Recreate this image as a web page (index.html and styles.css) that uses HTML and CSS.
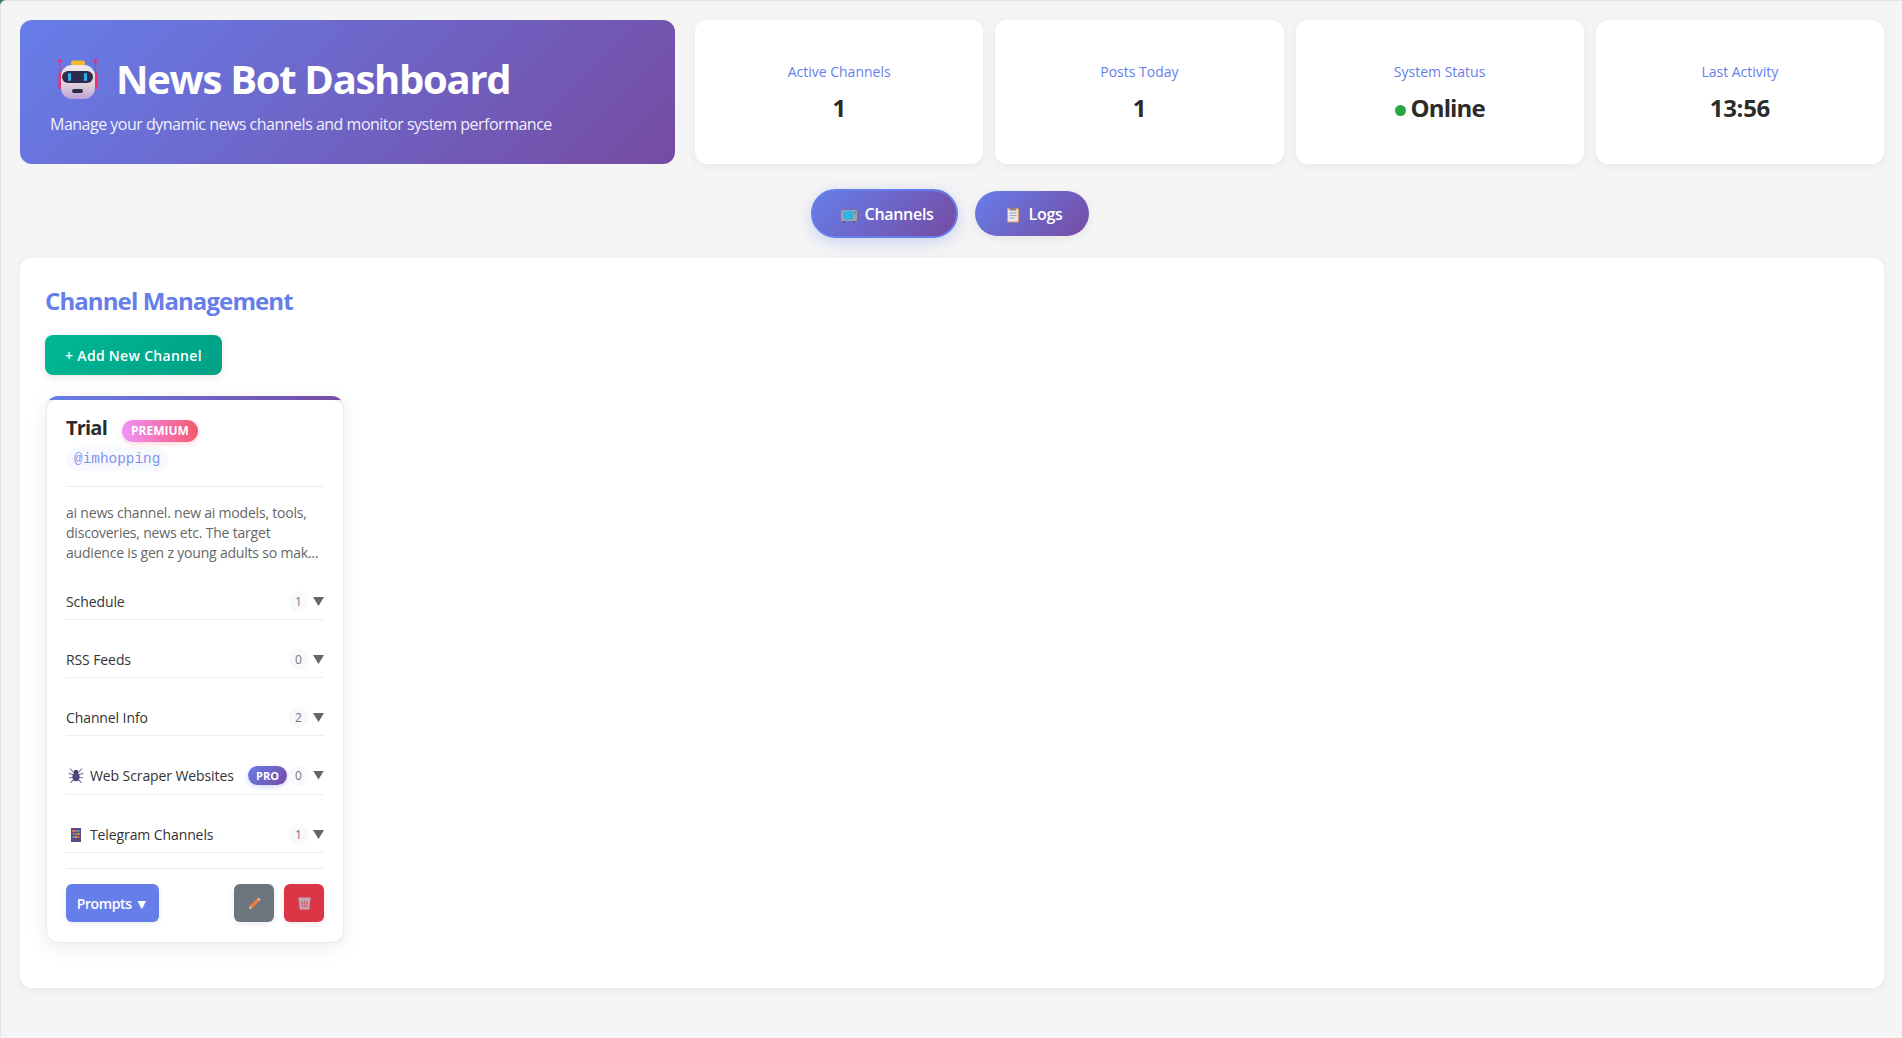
FILE: index.html
```html
<!DOCTYPE html>
<html lang="en">
    <head>
        <meta charset="UTF-8">
        <meta name="viewport" content="width=device-width, initial-scale=1.0">
        <title>News Bot Dashboard</title>
        <link rel="stylesheet" href="styles.css">
    </head>
    <body>
        <div class="top-row">
            <header class="hero">
                <h1>
                    <svg class="robot" viewBox="0 0 40 40">
                        <defs>
                            <linearGradient id="robotFace" x1="0" y1="0" x2="0" y2="1">
                                <stop offset="0" stop-color="#efe9ee"/>
                                <stop offset="0.6" stop-color="#dcd0dc"/>
                                <stop offset="1" stop-color="#bf9fd6"/>
                            </linearGradient>
                        </defs>
                        <rect x="1.2" y="2" width="1.2" height="14" fill="#ee2f6c"/>
                        <rect x="37" y="2" width="1.2" height="14" fill="#ee2f6c"/>
                        <circle cx="1.800" cy="2" r="1.700" fill="#f52a5e"/>
                        <circle cx="37.600" cy="2" r="1.700" fill="#f52a5e"/>
                        <rect x="0.500" y="14" width="5" height="16" rx="1.500" fill="#ee2f6c"/>
                        <rect x="34.500" y="14" width="5" height="16" rx="1.500" fill="#ee2f6c"/>
                        <rect x="13" y="1.500" width="14" height="5" rx="2.500" fill="#f4b92c"/>
                        <rect x="3" y="6" width="34" height="34" rx="11" fill="url(#robotFace)"/>
                        <rect x="4" y="12" width="31" height="12" rx="6" fill="#2f2b4f"/>
                        <rect x="10" y="14" width="3" height="8" rx="1.200" fill="#2bb2ee"/>
                        <rect x="26" y="14" width="3" height="8" rx="1.200" fill="#2bb2ee"/>
                        <rect x="14" y="30" width="11" height="4" rx="2" fill="#2f2b4f"/>
                    </svg>
                    <span>News Bot Dashboard</span>
                </h1>
                <p>Manage your dynamic news channels and monitor system performance</p>
            </header>

            <section class="stats">
                <div class="stat-card">
                    <div class="stat-label">Active Channels</div>
                    <div class="stat-value">1</div>
                </div>
                <div class="stat-card">
                    <div class="stat-label">Posts Today</div>
                    <div class="stat-value">1</div>
                </div>
                <div class="stat-card">
                    <div class="stat-label">System Status</div>
                    <div class="stat-value status-value"><span class="status-dot"></span>Online</div>
                </div>
                <div class="stat-card">
                    <div class="stat-label">Last Activity</div>
                    <div class="stat-value">13:56</div>
                </div>
            </section>
        </div>

        <nav class="tabs">
            <button class="tab active">
                <svg class="tab-icon" viewBox="0 0 18 18">
                    <path d="M6 5 4 2.500M10 5l2-2.500" stroke="#7a757a" fill="none"/>
                    <rect x="0" y="5" width="16" height="11" rx="1.500" fill="#a39fa3"/>
                    <rect x="2" y="6" width="10" height="8.500" rx="1" fill="#2fb4e6"/>
                    <rect x="13" y="7" width="2" height="1.500" fill="#7a757a"/>
                    <rect x="2" y="16" width="2" height="1.500" fill="#555"/>
                    <rect x="12" y="16" width="2" height="1.500" fill="#555"/>
                </svg>
                Channels
            </button>
            <button class="tab">
                <svg class="tab-icon" viewBox="0 0 18 18">
                    <rect x="2" y="3" width="12" height="14.500" rx="1" fill="#e09a5e"/>
                    <rect x="3" y="4.500" width="10" height="12" fill="#e8e4ee"/>
                    <rect x="5" y="2.500" width="6" height="3" fill="#8b8490"/>
                    <path d="M4.500 8h7M4.500 10.500h7M4.500 13h5" stroke="#aaa4b4"/>
                </svg>
                Logs
            </button>
        </nav>

        <main class="panel">
            <h2>Channel Management</h2>
            <button class="add-btn">+ Add New Channel</button>

            <article class="channel-card">
                <div class="channel-head">
                    <div class="channel-title">
                        <h3>Trial</h3>
                        <span class="premium">PREMIUM</span>
                    </div>
                    <span class="handle">@imhopping</span>
                </div>

                <p class="channel-desc">ai news channel. new ai models, tools, discoveries, news etc. The target audience is gen z young adults so mak...</p>

                <div class="row">
                    <span class="row-name">Schedule</span>
                    <span class="count">1</span>
                    <span class="arrow"></span>
                </div>
                <div class="row">
                    <span class="row-name">RSS Feeds</span>
                    <span class="count">0</span>
                    <span class="arrow"></span>
                </div>
                <div class="row">
                    <span class="row-name">Channel Info</span>
                    <span class="count">2</span>
                    <span class="arrow"></span>
                </div>
                <div class="row row-pro">
                    <svg class="row-icon" viewBox="0 0 16 16">
                        <path d="M6 6 2 1.500M6 8 .5 6M6 10l-5 1M6.500 12l-4 3.500M10 6l4-4.500M10 8l5.500-2M10 10l5 1M9.500 12l4 3.500" stroke="#7a6fa6" stroke-width="1.100" fill="none"/>
                        <circle cx="8" cy="5" r="2.200" fill="#44386e"/>
                        <ellipse cx="8" cy="10" rx="3.600" ry="4.200" fill="#54477f"/>
                    </svg>
                    <span class="row-name">Web Scraper Websites</span>
                    <span class="pro">PRO</span>
                    <span class="count">0</span>
                    <span class="arrow"></span>
                </div>
                <div class="row">
                    <svg class="row-icon" viewBox="0 0 16 16">
                        <rect x="3" y="1" width="10" height="14" fill="#5a4a86"/>
                        <rect x="4.500" y="3" width="2" height="2" fill="#f0a030"/>
                        <rect x="7" y="3" width="2" height="2" fill="#e85a4a"/>
                        <rect x="9.500" y="3" width="2" height="2" fill="#40a8e0"/>
                        <rect x="4.500" y="6" width="2" height="2" fill="#e85a4a"/>
                        <rect x="7" y="6" width="2" height="2" fill="#40b070"/>
                        <rect x="9.500" y="6" width="2" height="2" fill="#f0a030"/>
                        <rect x="4.500" y="9" width="2" height="2" fill="#40a8e0"/>
                        <rect x="7" y="9" width="2" height="2" fill="#f0a030"/>
                        <rect x="9.500" y="9" width="2" height="2" fill="#e85a4a"/>
                    </svg>
                    <span class="row-name">Telegram Channels</span>
                    <span class="count">1</span>
                    <span class="arrow"></span>
                </div>

                <div class="card-actions">
                    <button class="prompts-btn">Prompts ▼</button>
                    <button class="icon-btn edit">
                        <svg viewBox="0 0 16 16" width="15" height="15">
                            <path d="M3 10.500 10.500 3l2.500 2.500L5.500 13z" fill="#f47a3c"/>
                            <path d="M10.500 3 12 1.500l2.500 2.500L13 5.500z" fill="#f3a9a0"/>
                            <path d="M3 10.500 2 14l3.500-1z" fill="#f0c08a"/>
                        </svg>
                    </button>
                    <button class="icon-btn delete">
                        <svg viewBox="0 0 16 16" width="15" height="15">
                            <path d="M1.500 1.500h13l-1.500 13H3z" fill="#bfabb5"/>
                            <path d="M5 4.500l1 8M8 4.500v8M11 4.500l-1 8M4 7.500h8M4 10.500h8" stroke="#d6566b" stroke-width=".7"/>
                        </svg>
                    </button>
                </div>
            </article>
        </main>
    </body>
</html>
```

FILE: styles.css
```css
* {
    box-sizing: border-box;
}

html {
    background-color: #2e7d5a;
}

body {
    font-family: "Open Sans", "Noto Sans", sans-serif;
    margin: 0;
    padding: 20px 18px 50px 20px;
    min-height: 100vh;
    background-color: #f5f5f5;
    color: #2b2b2b;
    border-top: 1px solid #e4e4e4;
    border-left: 1px solid #e4e4e4;
    border-top-left-radius: 6px;
}

button {
    font-family: inherit;
    border: none;
    cursor: pointer;
}

.top-row {
    display: grid;
    grid-template-columns: 655px 1fr;
    gap: 20px;
    margin-left: -1px;
    margin-top: -1px;
}

.hero {
    height: 144px;
    padding: 33px 30px 0;
    border-radius: 12px;
    color: white;
    background: linear-gradient(135deg, #667eea 0%, #764ba2 100%);
}

.hero h1 {
    display: flex;
    align-items: center;
    gap: 18px;
    margin: 0 0 10px;
    height: 50px;
    font-size: 40px;
    font-weight: 700;
    letter-spacing: -1.3px;
}

.robot {
    width: 40px;
    height: 40px;
    margin: 2px 0 0 8px;
}

.hero p {
    margin: 0;
    font-size: 16px;
    letter-spacing: -0.5px;
    opacity: 0.9;
}

.stats {
    display: grid;
    grid-template-columns: repeat(4, 1fr);
    gap: 12px;
}

.stat-card {
    display: flex;
    flex-direction: column;
    align-items: center;
    justify-content: center;
    gap: 11px;
    padding-top: 2px;
    background: white;
    border-radius: 12px;
    box-shadow: 0 2px 10px rgba(0, 0, 0, 0.06);
}

.stat-label {
    font-size: 14px;
    color: #667eea;
}

.stat-value {
    display: flex;
    align-items: center;
    font-size: 24px;
    font-weight: 700;
    line-height: 32px;
    letter-spacing: -0.3px;
    color: #2b2b2b;
}

.status-value {
    letter-spacing: -0.9px;
}

.status-dot {
    width: 11px;
    height: 11px;
    margin: 5px 5px 0 0;
    border-radius: 50%;
    background-color: #28a745;
}

.tabs {
    display: flex;
    justify-content: center;
    align-items: center;
    gap: 17px;
    margin: 25px 0 20px;
    padding-right: 5px;
    height: 49px;
}

.tab {
    display: flex;
    align-items: center;
    gap: 6px;
    height: 45px;
    padding: 0 27px 0 30px;
    border-radius: 25px;
    color: white;
    font-size: 16px;
    font-weight: 600;
    letter-spacing: -0.3px;
    background: linear-gradient(135deg, #667eea 0%, #764ba2 100%);
    box-shadow: 0 2px 10px rgba(0, 0, 0, 0.08);
}

.tab.active {
    height: 49px;
    padding: 0 22px 0 28px;
    border: 2px solid #667eea;
    box-shadow: 0 4px 15px rgba(102, 126, 234, 0.3);
}

.tab-icon {
    width: 18px;
    height: 18px;
}

.panel {
    height: 730px;
    margin-left: -1px;
    padding: 27px 25px 0;
    background: white;
    border-radius: 12px;
    box-shadow: 0 2px 10px rgba(0, 0, 0, 0.06);
}

.panel h2 {
    margin: 0 0 18px;
    font-size: 24px;
    line-height: 32px;
    font-weight: 700;
    letter-spacing: -0.9px;
    color: #667eea;
}

.add-btn {
    display: block;
    width: 177px;
    height: 40px;
    margin-bottom: 21px;
    border-radius: 8px;
    color: white;
    font-size: 14px;
    font-weight: 600;
    letter-spacing: 0.3px;
    background: linear-gradient(135deg, #00b894 0%, #00a085 100%);
    box-shadow: 0 2px 8px rgba(0, 0, 0, 0.1);
}

.channel-card {
    width: 298px;
    height: 547px;
    margin-left: 1px;
    padding: 14px 19px 0;
    border: 1px solid #e9ecef;
    border-top: 4px solid transparent;
    border-radius: 12px;
    background:
        linear-gradient(white, white) padding-box,
        linear-gradient(90deg, #667eea, #764ba2) top / 100% 4px no-repeat border-box,
        #e9ecef border-box;
    box-shadow: 0 4px 20px rgba(0, 0, 0, 0.08);
}

.channel-head {
    padding-bottom: 15px;
    border-bottom: 1px solid #e9ecef;
}

.channel-title {
    display: flex;
    align-items: flex-end;
    gap: 15px;
    height: 28px;
}

.channel-title h3 {
    margin: 0;
    font-size: 20px;
    line-height: 28px;
    font-weight: 700;
    letter-spacing: -0.8px;
}

.premium {
    padding: 3px 9px;
    border-radius: 12px;
    color: white;
    font-size: 12px;
    font-weight: 700;
    line-height: 16px;
    background: linear-gradient(90deg, #f093fb, #f5576c);
    box-shadow: 0 2px 5px rgba(245, 87, 108, 0.25);
}

.handle {
    display: block;
    width: fit-content;
    margin-top: 5px;
    padding: 3px 8px;
    border-radius: 12px;
    font-family: "Liberation Mono", monospace;
    font-size: 14.4px;
    line-height: 18px;
    color: #7f93ee;
    background-color: #f8f9ff;
}

.channel-desc {
    margin: 16px 0 24px;
    font-size: 14px;
    line-height: 20px;
    letter-spacing: -0.2px;
    color: #666;
}

.row {
    display: flex;
    align-items: center;
    height: 33px;
    margin-bottom: 25px;
    padding-bottom: 3px;
    border-bottom: 1px solid #eeeeee;
    font-size: 14px;
    font-weight: 500;
    color: #333;
}

.row-pro {
    height: 34px;
    padding-bottom: 5px;
}

.row-name {
    flex: 1;
    letter-spacing: -0.1px;
}

.row-icon {
    width: 16px;
    height: 16px;
    margin: 0 6px 0 2px;
}

.count {
    display: flex;
    align-items: center;
    justify-content: center;
    width: 19px;
    height: 21px;
    margin-right: 5px;
    border-radius: 50%;
    font-size: 12px;
    font-weight: 400;
    color: #777;
    background-color: #f8f9fa;
}

.arrow {
    width: 11px;
    height: 9px;
    background-color: #666;
    clip-path: polygon(0 0, 100% 0, 50% 100%);
}

.pro {
    margin-right: 2px;
    padding: 2px 8px;
    border-radius: 10px;
    color: white;
    font-size: 11px;
    font-weight: 700;
    line-height: 15px;
    background: linear-gradient(135deg, #667eea, #764ba2);
    box-shadow: 0 2px 5px rgba(102, 126, 234, 0.3);
}

.card-actions {
    display: flex;
    align-items: center;
    gap: 10px;
    padding-top: 15px;
    margin-top: -10px;
    border-top: 1px solid #e9ecef;
}

.prompts-btn {
    width: 93px;
    height: 38px;
    margin-right: auto;
    border-radius: 6px;
    color: white;
    font-size: 14px;
    font-weight: 600;
    letter-spacing: -0.4px;
    background-color: #667eea;
    box-shadow: 0 2px 6px rgba(0, 0, 0, 0.08);
}

.icon-btn {
    display: flex;
    align-items: center;
    justify-content: center;
    width: 40px;
    height: 38px;
    padding: 0;
    border-radius: 6px;
    box-shadow: 0 2px 6px rgba(0, 0, 0, 0.08);
}

.edit {
    background-color: #6c757d;
}

.delete {
    background-color: #dc3545;
}
```
